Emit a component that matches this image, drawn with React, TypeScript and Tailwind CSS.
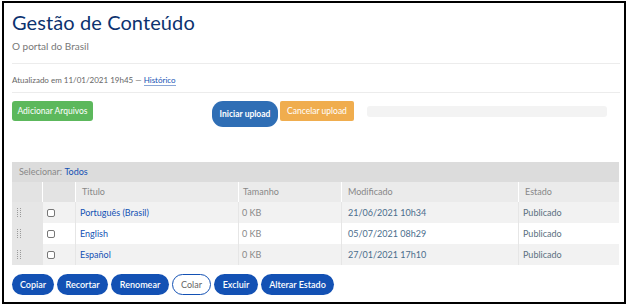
import React from "react";

const rows = [
  { t: "Português (Brasil)", s: "0 KB", m: "21/06/2021 10h34", e: "Publicado", alt: true },
  { t: "English", s: "0 KB", m: "05/07/2021 08h29", e: "Publicado", alt: false },
  { t: "Español", s: "0 KB", m: "27/01/2021 17h10", e: "Publicado", alt: true },
];

function Grip() {
  return (
    <svg width="5" height="9" viewBox="0 0 5 9" className="block">
      {[0, 2, 4, 6, 8].map((y) => (
        <g key={y}>
          <rect x="0" y={y} width="1" height="1" fill="#9a9a9a" />
          <rect x="3" y={y} width="1" height="1" fill="#9a9a9a" />
        </g>
      ))}
    </svg>
  );
}

const bottom = [
  { l: "Copiar", w: "w-[42px]" },
  { l: "Recortar", w: "w-[51px]" },
  { l: "Renomear", w: "w-[58px]" },
];
const bottom2 = [
  { l: "Excluir", w: "w-[44px]" },
  { l: "Alterar Estado", w: "w-[73px]" },
];

export default function App() {
  const font = { fontFamily: "Lato, 'Open Sans', sans-serif" };
  return (
    <div className="w-[628px] h-[307px] bg-white pl-[2px] pt-[1px]" style={font}>
      <div className="w-[624px] h-[303px] border-2 border-black pl-[8px] pr-[4px] pt-[6px] flex flex-col">
        <h1 className="text-[20px] leading-[26px] text-[#0c326f] font-normal tracking-[0.1px]">Gestão de Conteúdo</h1>
        <div className="text-[10px] leading-[14px] text-[#777] mt-[4px]">O portal do Brasil</div>
        <div className="h-px bg-[#ececec] mt-[10px]" />
        <div className="text-[8px] leading-[12px] text-[#666] mt-[10px]">
          Atualizado em 11/01/2021 19h45 — <span className="text-[#1351b4] border-b border-[#8aa6d6]">Histórico</span>
        </div>
        <div className="h-px bg-[#ececec] mt-[6px]" />
        <div className="flex items-start mt-[8px] h-[61px]">
          <div className="w-[81px] h-[20px] bg-[#5cb85c] rounded-[3px] text-white text-[8.5px] flex items-center justify-center">Adicionar Arquivos</div>
          <div className="ml-[119px] w-[66px] h-[26px] bg-[#2f6eb5] rounded-[11px] text-white text-[8.5px] font-bold flex items-center justify-center">Iniciar upload</div>
          <div className="ml-[2px] w-[74px] h-[20px] bg-[#f0ad4e] rounded-[2px] text-white text-[8.5px] flex items-center justify-center">Cancelar upload</div>
          <div className="ml-[13px] mt-[5px] w-[240px] h-[11px] bg-[#f3f3f3] rounded-[3px]" />
        </div>
        <div className="w-[607px] text-[9px]">
          <div className="h-[20px] bg-[#dcdcdc] flex items-center pl-[7px] text-[#888]">
            Selecionar:&nbsp;<span className="text-[#1351b4]">Todos</span>
          </div>
          <div className="flex h-[20px] bg-[#e6e6e6] text-[#888]">
            <div className="w-[30px] bg-[#e3e3e3]" />
            <div className="w-[33px] border-l border-white bg-[#e3e3e3]" />
            <div className="w-[163px] border-l border-white flex items-center pl-[6px] bg-[#ebebeb]">Titulo</div>
            <div className="w-[103px] border-l border-white flex items-center pl-[4px] bg-[#ebebeb]">Tamanho</div>
            <div className="w-[177px] border-l border-white flex items-center pl-[6px] bg-[#ebebeb]">Modificado</div>
            <div className="flex-1 border-l border-white flex items-center pl-[6px] bg-[#ebebeb]">Estado</div>
          </div>
          {rows.map((r) => (
            <div key={r.t} className={`flex h-[21px] ${r.alt ? "bg-[#f2f2f2]" : "bg-white"}`}>
              <div className="w-[30px] bg-[#e6e6e6] flex items-center pl-[5px]"><Grip /></div>
              <div className="w-[33px] border-l border-[#e6e6e6] flex items-center pl-[4px]">
                <div className="w-[8px] h-[8px] border border-[#777] rounded-[2px] bg-white" />
              </div>
              <div className="w-[163px] border-l border-[#e6e6e6] flex items-center pl-[4px] text-[#1351b4]">{r.t}</div>
              <div className="w-[103px] border-l border-[#e6e6e6] flex items-center pl-[3px] text-[#888]">{r.s}</div>
              <div className="w-[177px] border-l border-[#e6e6e6] flex items-center pl-[6px] text-[#4a6d8c]">{r.m}</div>
              <div className="flex-1 border-l border-[#e6e6e6] flex items-center pl-[4px] text-[#5b7080]">{r.e}</div>
            </div>
          ))}
        </div>
        <div className="flex gap-[3px] mt-[9px] text-[9px]">
          {bottom.map((b) => (
            <div key={b.l} className={`${b.w} h-[21px] rounded-full bg-[#1351b4] text-white font-semibold flex items-center justify-center`}>{b.l}</div>
          ))}
          <div className="w-[39px] h-[21px] rounded-full border border-[#1351b4] text-[#666] flex items-center justify-center">Colar</div>
          {bottom2.map((b) => (
            <div key={b.l} className={`${b.w} h-[21px] rounded-full bg-[#1351b4] text-white font-semibold flex items-center justify-center`}>{b.l}</div>
          ))}
        </div>
      </div>
    </div>
  );
}
